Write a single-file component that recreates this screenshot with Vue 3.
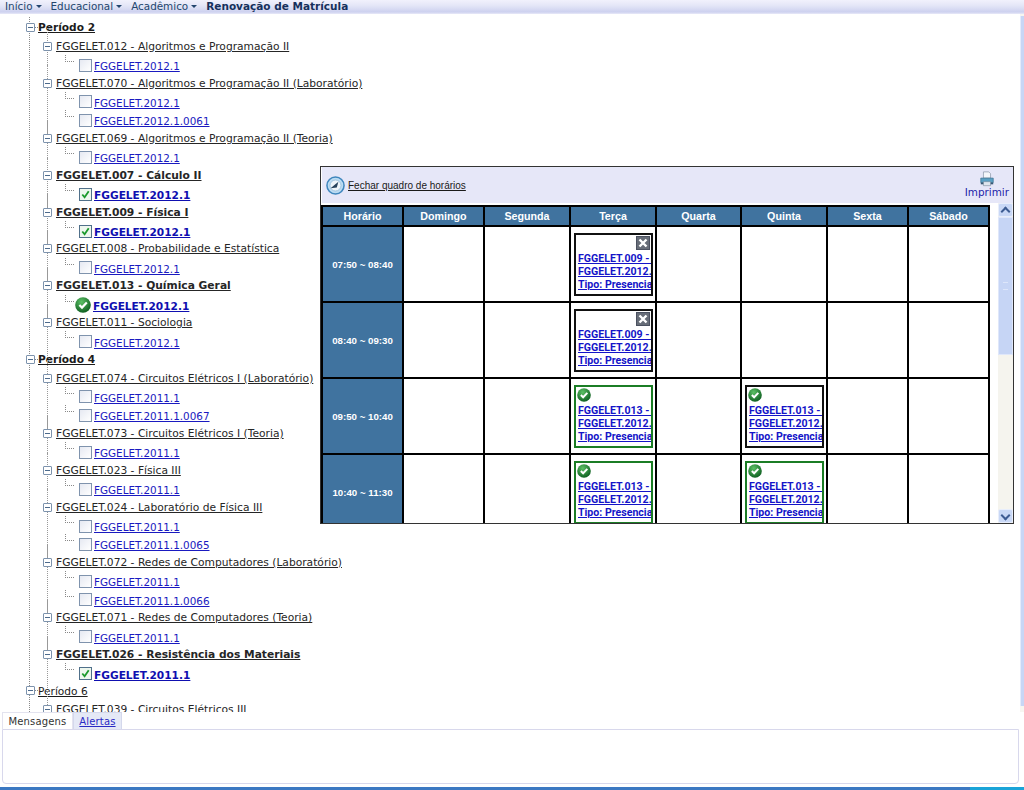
<template>
  <div class="page">
    <!-- Top menu -->
    <div class="topbar">
      <span v-for="m in menus" :key="m" class="menu-item">{{ m }}<i class="caret"></i></span>
      <span class="menu-title">Renovação de Matrícula</span>
    </div>

    <div class="main">
      <!-- Curriculum tree -->
      <div class="tree">
        <div v-for="p in periods" :key="p.name" class="period">
          <div class="period-row">
            <span class="toggle"></span>
            <span class="dots"></span>
            <span class="period-name" :class="{ bold: p.bold }">{{ p.name }}</span>
          </div>
          <div v-for="c in p.courses" :key="c.name" class="course">
            <div class="course-row">
              <span class="toggle"></span>
              <span class="course-name" :class="{ bold: c.bold }">{{ c.name }}</span>
            </div>
            <div v-for="o in c.offers" :key="o" class="offer-row">
              <span class="elbow"></span>
              <svg v-if="c.state === 'ok'" class="ok-tree" viewBox="0 0 16 16">
                <use href="#ok-icon" />
              </svg>
              <span v-else class="check" :class="{ checked: c.bold }">
                <svg v-if="c.bold" viewBox="0 0 12 12" width="11" height="11">
                  <path d="M2.5 6 L5 9 L9.5 2.5" fill="none" stroke="#1c9a2c" stroke-width="2" />
                </svg>
              </span>
              <a class="offer-link" :class="{ bold: c.bold }" href="#">{{ o }}</a>
            </div>
          </div>
        </div>
      </div>
      <div class="page-scroll"><div class="page-thumb"></div></div>
    </div>

    <!-- Messages -->
    <div class="tabs">
      <span class="tab active">Mensagens</span>
      <span class="tab"><a href="#">Alertas</a></span>
    </div>
    <div class="tab-body"></div>
    <div class="spacer"></div>
    <div class="footer-bar"><div class="footer-blue"></div><div class="footer-teal"></div></div>

    <!-- Timetable popup -->
    <div class="popup">
      <div class="popup-head">
        <svg class="clock" viewBox="0 0 20 20" width="19" height="19">
          <circle cx="10" cy="10" r="9" fill="#bcdcf3" stroke="#3f86bd" stroke-width="1.6" />
          <circle cx="10" cy="10" r="5.8" fill="#eef5fa" stroke="#8db8d8" stroke-width="0.8" />
          <path d="M4.8 12.8 L13 6 L11.4 12 Z" fill="#26425c" />
        </svg>
        <a class="close-link" href="#">Fechar quadro de horários</a>
        <a class="print" href="#">
          <svg viewBox="0 0 18 18" width="16" height="16">
            <path d="M5 1 H11 L13 3 V8 H5 Z" fill="#f4f6fa" stroke="#8896a8" stroke-width="0.8" />
            <path d="M2 8 H16 V13 H2 Z" fill="#5aa0c4" stroke="#3a6f8e" stroke-width="0.8" />
            <path d="M2 13 H16 V15 H2 Z" fill="#3a5a76" />
            <path d="M5 12 H13 V16.5 H5 Z" fill="#dfe6ee" stroke="#6d7e90" stroke-width="0.6" />
          </svg>
          <span>Imprimir</span>
        </a>
      </div>
      <div class="popup-body">
        <div class="grid-wrap">
          <table class="grid">
            <colgroup>
              <col v-for="(w, i) in colWidths" :key="i" :style="{ width: w + 'px' }" />
            </colgroup>
            <thead>
              <tr>
                <th v-for="d in days" :key="d">{{ d }}</th>
              </tr>
            </thead>
            <tbody>
              <tr v-for="r in rows" :key="r.time">
                <td class="time">{{ r.time }}</td>
                <td v-for="n in 2" :key="n"></td>
                <td class="slot"><div v-if="r.tue" class="card" :class="r.tue.color">
                    <div class="card-icon">
                      <svg v-if="r.tue.icon === 'x'" class="x-icon" viewBox="0 0 14 14" width="14" height="14">
                        <rect width="14" height="14" fill="#4b5160" />
                        <rect x="1" y="1" width="12" height="12" fill="#676d78" />
                        <path d="M3.5 3.5 L10.5 10.5 M10.5 3.5 L3.5 10.5" stroke="#fff" stroke-width="2.4" />
                      </svg>
                      <svg v-else class="ok-icon" viewBox="0 0 16 16" width="14" height="14">
                        <use href="#ok-icon" />
                      </svg>
                    </div>
                    <a v-for="l in r.tue.lines" :key="l" class="card-line" href="#">{{ l }}</a>
                  </div></td>
                <td></td>
                <td class="slot"><div v-if="r.thu" class="card" :class="r.thu.color">
                    <div class="card-icon">
                      <svg class="ok-icon" viewBox="0 0 16 16" width="14" height="14">
                        <use href="#ok-icon" />
                      </svg>
                    </div>
                    <a v-for="l in r.thu.lines" :key="l" class="card-line" href="#">{{ l }}</a>
                  </div></td>
                <td></td>
                <td></td>
              </tr>
            </tbody>
          </table>
        </div>
        <div class="scrollbar">
          <div class="sb-btn up"><i></i></div>
          <div class="sb-thumb"><span></span></div>
          <div class="sb-rest"></div>
          <div class="sb-btn down"><i></i></div>
        </div>
      </div>
    </div>

    <!-- shared icon -->
    <svg class="defs" width="0" height="0">
      <defs>
        <radialGradient id="okg" cx="40%" cy="30%" r="75%">
          <stop offset="0" stop-color="#5cc065" />
          <stop offset="1" stop-color="#0a5a1d" />
        </radialGradient>
        <g id="ok-icon">
          <circle cx="8" cy="8" r="7.8" fill="url(#okg)" />
          <path d="M4.4 8 L7 10.6 L11.8 5.6" fill="none" stroke="#fff" stroke-width="2.2" />
        </g>
      </defs>
    </svg>
  </div>
</template>

<script setup>
const menus = ['Início', 'Educacional', 'Acadêmico']

const periods = [
  {
    name: 'Período 2', bold: true,
    courses: [
      { name: 'FGGELET.012 - Algoritmos e Programação II', offers: ['FGGELET.2012.1'] },
      { name: 'FGGELET.070 - Algoritmos e Programação II (Laboratório)', offers: ['FGGELET.2012.1', 'FGGELET.2012.1.0061'] },
      { name: 'FGGELET.069 - Algoritmos e Programação II (Teoria)', offers: ['FGGELET.2012.1'] },
      { name: 'FGGELET.007 - Cálculo II', bold: true, offers: ['FGGELET.2012.1'] },
      { name: 'FGGELET.009 - Física I', bold: true, offers: ['FGGELET.2012.1'] },
      { name: 'FGGELET.008 - Probabilidade e Estatística', offers: ['FGGELET.2012.1'] },
      { name: 'FGGELET.013 - Química Geral', bold: true, state: 'ok', offers: ['FGGELET.2012.1'] },
      { name: 'FGGELET.011 - Sociologia', offers: ['FGGELET.2012.1'] },
    ],
  },
  {
    name: 'Período 4', bold: true,
    courses: [
      { name: 'FGGELET.074 - Circuitos Elétricos I (Laboratório)', offers: ['FGGELET.2011.1', 'FGGELET.2011.1.0067'] },
      { name: 'FGGELET.073 - Circuitos Elétricos I (Teoria)', offers: ['FGGELET.2011.1'] },
      { name: 'FGGELET.023 - Física III', offers: ['FGGELET.2011.1'] },
      { name: 'FGGELET.024 - Laboratório de Física III', offers: ['FGGELET.2011.1', 'FGGELET.2011.1.0065'] },
      { name: 'FGGELET.072 - Redes de Computadores (Laboratório)', offers: ['FGGELET.2011.1', 'FGGELET.2011.1.0066'] },
      { name: 'FGGELET.071 - Redes de Computadores (Teoria)', offers: ['FGGELET.2011.1'] },
      { name: 'FGGELET.026 - Resistência dos Materiais', bold: true, offers: ['FGGELET.2011.1'] },
    ],
  },
  {
    name: 'Período 6',
    courses: [
      { name: 'FGGELET.039 - Circuitos Elétricos III', offers: [] },
    ],
  },
]

const days = ['Horário', 'Domingo', 'Segunda', 'Terça', 'Quarta', 'Quinta', 'Sexta', 'Sábado']
const colWidths = [81, 81, 86, 86, 85, 86, 81, 81]

const fisica = ['FGGELET.009 - Física I', 'FGGELET.2012.1', 'Tipo: Presencial']
const quimica = ['FGGELET.013 - Química Geral', 'FGGELET.2012.1', 'Tipo: Presencial']

const rows = [
  { time: '07:50 ~ 08:40', tue: { color: 'black', icon: 'x', lines: fisica } },
  { time: '08:40 ~ 09:30', tue: { color: 'black', icon: 'x', lines: fisica } },
  { time: '09:50 ~ 10:40', tue: { color: 'green', icon: 'ok', lines: quimica }, thu: { color: 'black', lines: quimica } },
  { time: '10:40 ~ 11:30', tue: { color: 'green', icon: 'ok', lines: quimica }, thu: { color: 'green', lines: quimica } },
]
</script>

<style>
html, body { margin: 0; background: #fff; overflow: hidden; }
</style>

<style scoped>
.page {
  width: 1024px;
  height: 790px;
  display: flex;
  flex-direction: column;
  position: relative;
  overflow: hidden;
  font-family: "DejaVu Sans", Verdana, sans-serif;
  font-size: 10.7px;
  color: #222;
}
.defs { position: absolute; }

/* top menu */
.topbar {
  height: 14px;
  flex: none;
  display: flex;
  align-items: flex-start;
  padding-left: 5px;
  font-size: 10.4px;
  line-height: 13px;
  color: #24466e;
  background: linear-gradient(#f1f1fc 0, #e4e6f7 40%, #cdd1ef 85%, #e8e9f8 100%);
  white-space: nowrap;
}
.menu-item { margin-right: 9px; }
.caret {
  display: inline-block;
  margin-left: 3px;
  vertical-align: 2px;
  border: 3px solid transparent;
  border-top: 3px solid #24466e;
  border-bottom: 0;
}
.menu-title { font-weight: 700; color: #16305c; font-size: 10.5px; }

.main {
  flex: none;
  height: 698px;
  display: flex;
  overflow: hidden;
}
.tree {
  flex: 1;
  padding-top: 4px;
  position: relative;
  overflow: hidden;
}
.tree::before {
  content: "";
  position: absolute;
  left: 29px;
  top: 3px;
  bottom: 0;
  border-left: 1px dotted #8a8a8a;
}
.page-scroll {
  flex: none;
  width: 4px;
  background: #f7f6f1;
  padding-top: 2px;
}
.page-thumb {
  height: 690px;
  background: #c8d6f5;
  border-left: 1px solid #e4ebfb;
}

.period-row, .course-row, .offer-row {
  height: 18.44px;
  display: flex;
  align-items: center;
  white-space: nowrap;
  position: relative;
  box-sizing: border-box;
}
.period-row { padding-left: 26px; }
.course-row { padding-left: 43px; padding-top: 1px; }
.offer-row { padding-left: 79px; padding-top: 4px; }

.course { position: relative; }
.course::before {
  content: "";
  position: absolute;
  left: 47px;
  top: -8px;
  bottom: -8px;
  border-left: 1px dotted #999;
}
.toggle {
  flex: none;
  width: 7px;
  height: 7px;
  margin-right: 3px;
  border: 1px solid #7d93ad;
  border-radius: 1px;
  background: #fff;
  position: relative;
  z-index: 1;
}
.toggle::after {
  content: "";
  position: absolute;
  left: 1px;
  right: 1px;
  top: 3px;
  height: 1px;
  background: #4c6a8c;
}
.course-row .toggle { margin-right: 4px; }
.dots {
  width: 3px;
  margin-left: -3px;
  margin-right: 1px;
  border-top: 1px dotted #888;
}
.period-name { text-decoration: underline; color: #1b1b1b; margin-left: -1px; font-size: 10.6px; }
.course-name { text-decoration: underline; color: #262626; }
.bold { font-weight: 700; }

.elbow {
  position: absolute;
  left: 65px;
  top: 0;
  width: 8px;
  height: 6px;
  border-left: 1px dotted #888;
  border-bottom: 1px dotted #888;
}
.check {
  flex: none;
  width: 11px;
  height: 11px;
  margin-right: 2px;
  border: 1px solid #7f93ad;
  background: linear-gradient(135deg, #e6e9f2, #fff);
  line-height: 0;
  position: relative;
  top: -1px;
}
.check.checked { border-color: #50708a; background: #eef7ee; }
.ok-tree {
  flex: none;
  width: 16px;
  height: 16px;
  margin-left: -4px;
  margin-right: 2px;
  position: relative;
  top: -1px;
}
.offer-link { color: #1a1ac0; font-size: 10.4px; }
.offer-link.bold { color: #0f0fb0; font-size: 10.6px; }

/* messages */
.tabs {
  flex: none;
  height: 17px;
  display: flex;
  padding-left: 2px;
  position: relative;
  z-index: 1;
}
.tab {
  padding: 0 5.5px;
  height: 17px;
  line-height: 18px;
  font-size: 10px;
  letter-spacing: 0.15px;
  color: #333;
  background: #e5e9f6;
  border: 1px solid #d4d8ec;
  border-bottom: 0;
  box-sizing: border-box;
}
.tab.active { background: #fff; border-color: #e3e3ef; }
.tab a { color: #2a2ac4; }
.tab-body {
  flex: none;
  height: 55px;
  box-sizing: border-box;
  margin: 0 5px 0 2px;
  border: 1px solid #d8d8ec;
  border-radius: 0 0 4px 4px;
  background: #fff;
}
.spacer { flex: 1; }
.footer-bar { flex: none; height: 3px; display: flex; }
.footer-blue { width: 970px; background: #3b78c2; }
.footer-teal { flex: 1; background: #1aa3d8; }

/* popup */
.popup {
  position: absolute;
  left: 320px;
  top: 166px;
  width: 694px;
  height: 358px;
  box-sizing: border-box;
  border: 1px solid #333;
  background: #fff;
  display: flex;
  flex-direction: column;
  font-family: "Liberation Sans", Arial, sans-serif;
}
.popup-head {
  flex: none;
  height: 36px;
  margin: 0 0 0 1px;
  padding: 0 4px 0 4px;
  background: #e6e7f8;
  display: flex;
  align-items: center;
}
.clock { flex: none; margin-right: 3px; }
.close-link { color: #1a1a1a; font-size: 10px; text-decoration: underline; }
.print {
  margin-left: auto;
  display: flex;
  flex-direction: column;
  align-items: center;
  padding-bottom: 2px;
  color: #1c1ca8;
  font-family: "DejaVu Sans", Verdana, sans-serif;
  font-size: 10.4px;
  line-height: 10px;
  text-decoration: none;
}
.popup-body {
  flex: 1;
  min-height: 0;
  display: flex;
  overflow: hidden;
}
.grid-wrap {
  flex: 1;
  overflow: hidden;
  padding-top: 2px;
}
.grid {
  border-collapse: collapse;
  table-layout: fixed;
  width: 667px;
  margin-left: 0;
  color: #fff;
}
.grid th, .grid td {
  border: 2px solid #000;
  padding: 0;
  box-sizing: border-box;
}
.grid th {
  height: 20px;
  background: #40739f;
  font-size: 10.7px;
  font-weight: 700;
  text-align: center;
}
.grid td {
  height: 76px;
  background: #fff;
  vertical-align: top;
}
.grid td.time {
  background: #40739f;
  font-size: 9.7px;
  font-weight: 700;
  text-align: center;
  vertical-align: middle;
}
.card {
  width: 79px;
  height: 63px;
  margin: 6px 0 0 3px;
  box-sizing: border-box;
  border: 2px solid #111;
  background: #fff;
  overflow: hidden;
  padding-left: 2px;
  font-family: Roboto, "Liberation Sans", sans-serif;
  font-size: 10.6px;
  font-weight: 700;
}
.card.green { border-color: #1b7d25; }
.card-icon {
  height: 18px;
  display: flex;
  justify-content: flex-end;
  padding: 1px 1px 0 0;
  box-sizing: border-box;
}
.ok-icon { margin-right: auto; margin-left: -1px; }
.card-line {
  display: block;
  height: 12.8px;
  line-height: 12.8px;
  white-space: nowrap;
  color: #1414c8;
}

.scrollbar {
  flex: none;
  width: 15px;
  display: flex;
  flex-direction: column;
  background: #f5f4ee;
}
.sb-btn {
  flex: none;
  height: 14px;
  background: #c9d8f6;
  border: 1px solid #e8eefb;
  box-sizing: border-box;
  border-radius: 2px;
  display: flex;
  align-items: center;
  justify-content: center;
}
.sb-btn i {
  width: 5px;
  height: 5px;
  border-left: 2px solid #3d5c92;
  border-top: 2px solid #3d5c92;
  transform: translateY(1px) rotate(45deg);
}
.sb-btn.down i { transform: translateY(-1px) rotate(225deg); }
.sb-thumb {
  flex: none;
  height: 138px;
  background: #c6d5f5;
  border: 1px solid #dfe7fa;
  box-sizing: border-box;
  display: flex;
  align-items: center;
  justify-content: center;
}
.sb-thumb span {
  width: 5px;
  height: 6px;
  border-top: 1px solid #dde6fa;
  border-bottom: 1px solid #dde6fa;
}
.sb-rest { flex: 1; }
</style>
